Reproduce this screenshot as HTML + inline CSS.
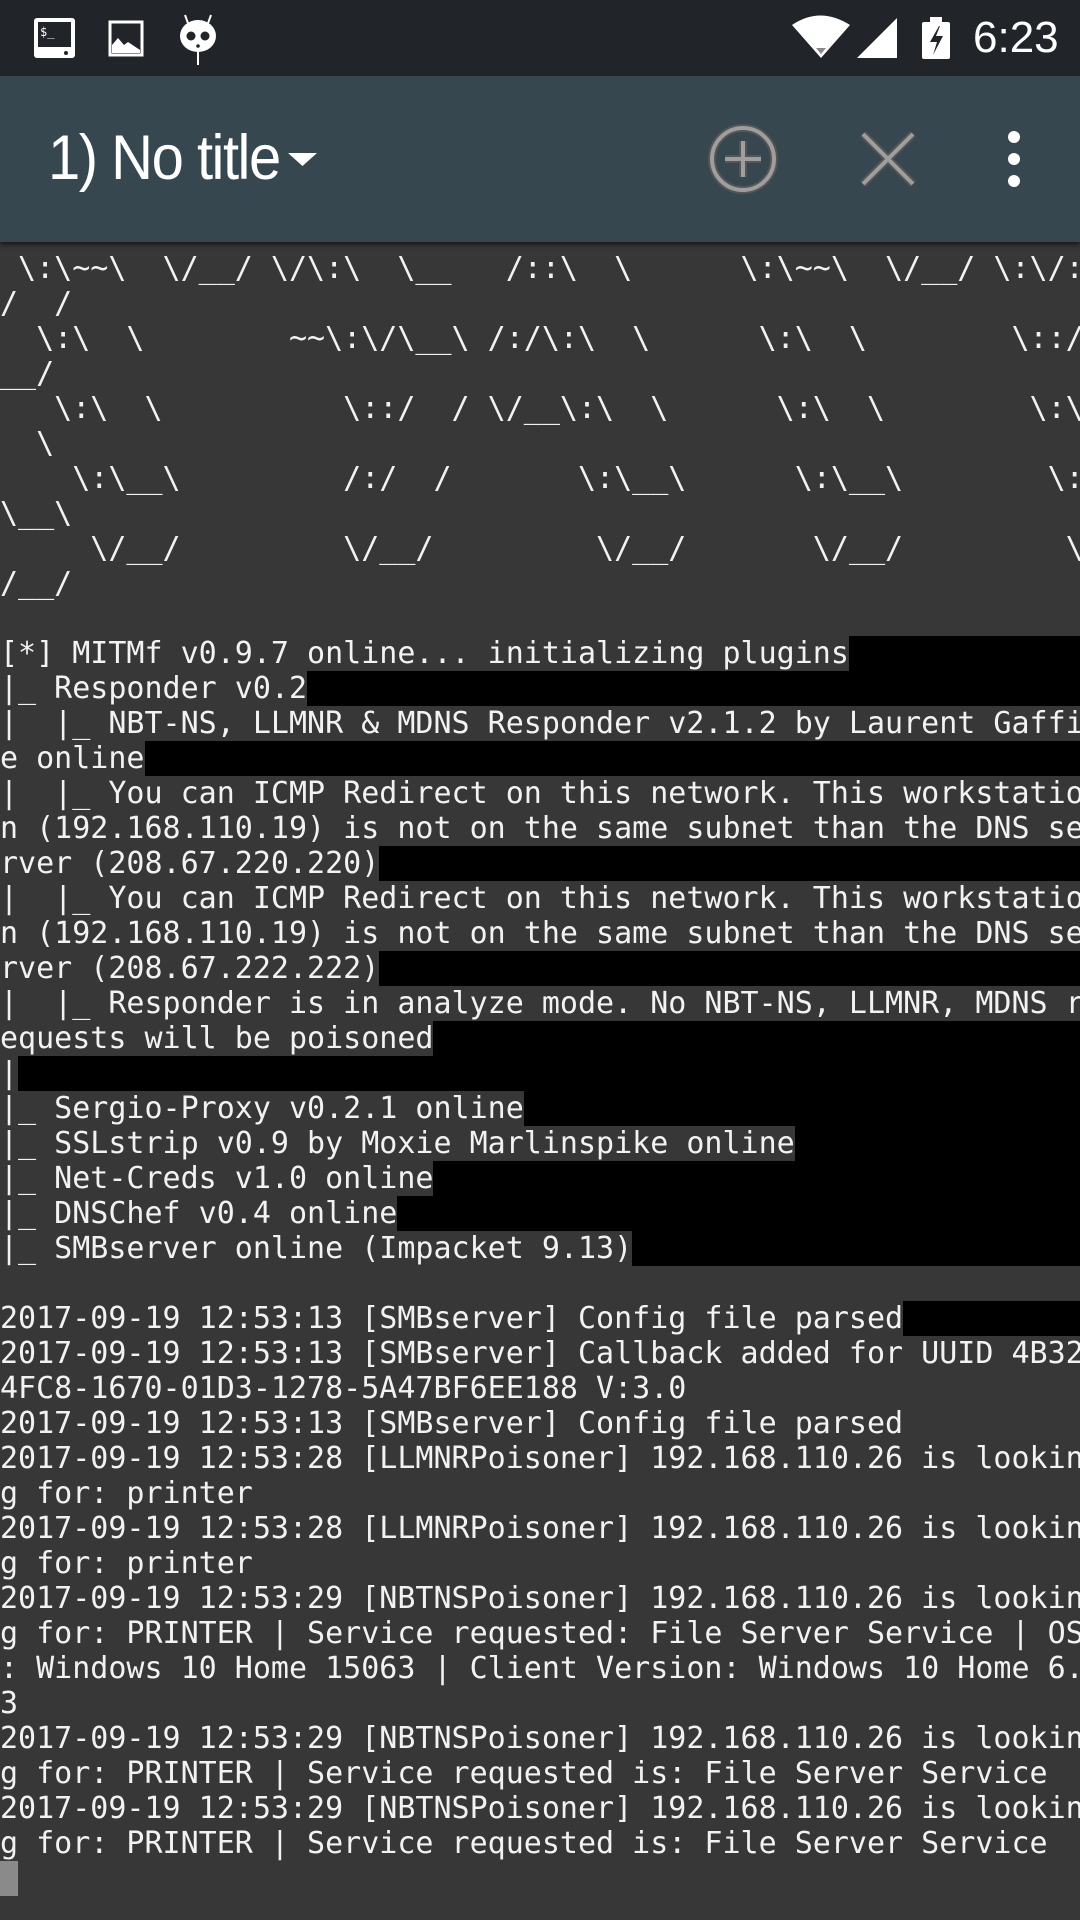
<!DOCTYPE html>
<html><head><meta charset="utf-8"><style>
*{margin:0;padding:0;box-sizing:border-box}
html,body{width:1080px;height:1920px;overflow:hidden;background:#373737}
#sb{position:absolute;left:0;top:0;width:1080px;height:76px;background:#212529}
#tb{position:absolute;left:0;top:76px;width:1080px;height:166px;background:#37474f;box-shadow:0 3px 4px rgba(0,0,0,.5)}
#title{position:absolute;left:48px;top:46px;font:58px "Liberation Sans",sans-serif;color:#fff;letter-spacing:-1.5px;transform:scaleY(1.08);transform-origin:top left}
#term{position:absolute;left:0;top:251px;width:1080px;font:30px/35px "DejaVu Sans Mono",monospace;color:#f2f2f2;white-space:pre}
.r{height:35px;width:1080px;overflow:hidden}
.b{background:#000}
.b span{background:#373737}
#time{position:absolute;left:973px;top:13px;font:44px "Liberation Sans",sans-serif;color:#fff}
</style></head><body>
<div id="sb">
<svg width="1080" height="76" style="position:absolute;left:0;top:0">
<rect x="34" y="18" width="41" height="40" rx="3" fill="#fff"/>
<rect x="38" y="22" width="33" height="25" fill="#212529"/>
<text x="40" y="36" font-size="12" fill="#fff" font-family="DejaVu Sans Mono">$_</text>
<circle cx="66" cy="53" r="2" fill="#212529"/>
<rect x="110" y="22" width="32" height="33" fill="none" stroke="#fff" stroke-width="3"/>
<path d="M112 53 L112 45 L118 38 L124 45 L128 42 L140 50 L140 53 Z" fill="#fff"/>
<path d="M185 15 L189 26 M211 15 L207 26" stroke="#fff" stroke-width="2"/>
<ellipse cx="198" cy="36" rx="18" ry="16" fill="#fff"/>
<circle cx="191" cy="36" r="4.5" fill="#212529"/><circle cx="205" cy="36" r="4.5" fill="#212529"/>
<circle cx="198" cy="46" r="1.8" fill="#212529"/>
<path d="M198 52 L198 65" stroke="#fff" stroke-width="2"/>
<path d="M792 25 Q820 6 850 25 L821 58 Z" fill="#fff"/>
<path d="M816 48 L826 48 L821 54 Z" fill="#888"/>
<path d="M857 58 L897 58 L897 18 Z" fill="#fff"/>
<rect x="922" y="22" width="28" height="37" rx="2" fill="#fff"/><rect x="930" y="17" width="12" height="6" fill="#fff"/>
<path d="M939 26 L930 42 L937 42 L933 55 L943 36 L936 36 L940 26 Z" fill="#212529"/>
</svg>
<div id="time">6:23</div>
</div>
<div id="tb">
<div id="title">1) No title</div>
<svg width="1080" height="166" style="position:absolute;left:0;top:0">
<path d="M288 77 L317 77 L302.5 90 Z" fill="#fff"/>
<circle cx="743" cy="83" r="31" fill="none" stroke="#555" stroke-width="8"/>
<circle cx="743" cy="83" r="31" fill="none" stroke="#9e9e9e" stroke-width="4"/>
<path d="M743 65 V101 M725 83 H761" stroke="#555" stroke-width="8"/>
<path d="M743 65 V101 M725 83 H761" stroke="#9e9e9e" stroke-width="4"/>
<path d="M863 58 L913 108 M913 58 L863 108" stroke="#555" stroke-width="8"/>
<path d="M863 58 L913 108 M913 58 L863 108" stroke="#9e9e9e" stroke-width="4"/>
<circle cx="1014" cy="61" r="6" fill="#fff"/><circle cx="1014" cy="83" r="6" fill="#fff"/><circle cx="1014" cy="105" r="6" fill="#fff"/>
</svg>
</div>
<div id="term"><div class="r"> \:\~~\  \/__/ \/\:\  \__   /::\  \      \:\~~\  \/__/ \:\/:</div><div class="r">/  /</div><div class="r">  \:\  \        ~~\:\/\__\ /:/\:\  \      \:\  \        \::/</div><div class="r">__/</div><div class="r">   \:\  \          \::/  / \/__\:\  \      \:\  \        \:\</div><div class="r">  \</div><div class="r">    \:\__\         /:/  /       \:\__\      \:\__\        \:</div><div class="r">\__\</div><div class="r">     \/__/         \/__/         \/__/       \/__/         \</div><div class="r">/__/</div><div class="r"> </div><div class="r b"><span>[*] MITMf v0.9.7 online... initializing plugins</span></div><div class="r b"><span>|_ Responder v0.2</span></div><div class="r b"><span>|  |_ NBT-NS, LLMNR &amp; MDNS Responder v2.1.2 by Laurent Gaffi</span></div><div class="r b"><span>e online</span></div><div class="r b"><span>|  |_ You can ICMP Redirect on this network. This workstatio</span></div><div class="r b"><span>n (192.168.110.19) is not on the same subnet than the DNS se</span></div><div class="r b"><span>rver (208.67.220.220)</span></div><div class="r b"><span>|  |_ You can ICMP Redirect on this network. This workstatio</span></div><div class="r b"><span>n (192.168.110.19) is not on the same subnet than the DNS se</span></div><div class="r b"><span>rver (208.67.222.222)</span></div><div class="r b"><span>|  |_ Responder is in analyze mode. No NBT-NS, LLMNR, MDNS r</span></div><div class="r b"><span>equests will be poisoned</span></div><div class="r b"><span>|</span></div><div class="r b"><span>|_ Sergio-Proxy v0.2.1 online</span></div><div class="r b"><span>|_ SSLstrip v0.9 by Moxie Marlinspike online</span></div><div class="r b"><span>|_ Net-Creds v1.0 online</span></div><div class="r b"><span>|_ DNSChef v0.4 online</span></div><div class="r b"><span>|_ SMBserver online (Impacket 9.13)</span></div><div class="r"> </div><div class="r b"><span>2017-09-19 12:53:13 [SMBserver] Config file parsed</span></div><div class="r">2017-09-19 12:53:13 [SMBserver] Callback added for UUID 4B32</div><div class="r">4FC8-1670-01D3-1278-5A47BF6EE188 V:3.0</div><div class="r">2017-09-19 12:53:13 [SMBserver] Config file parsed</div><div class="r">2017-09-19 12:53:28 [LLMNRPoisoner] 192.168.110.26 is lookin</div><div class="r">g for: printer</div><div class="r">2017-09-19 12:53:28 [LLMNRPoisoner] 192.168.110.26 is lookin</div><div class="r">g for: printer</div><div class="r">2017-09-19 12:53:29 [NBTNSPoisoner] 192.168.110.26 is lookin</div><div class="r">g for: PRINTER | Service requested: File Server Service | OS</div><div class="r">: Windows 10 Home 15063 | Client Version: Windows 10 Home 6.</div><div class="r">3</div><div class="r">2017-09-19 12:53:29 [NBTNSPoisoner] 192.168.110.26 is lookin</div><div class="r">g for: PRINTER | Service requested is: File Server Service</div><div class="r">2017-09-19 12:53:29 [NBTNSPoisoner] 192.168.110.26 is lookin</div><div class="r">g for: PRINTER | Service requested is: File Server Service</div><div class="r"><div style="width:18px;height:35px;background:#8a8a8a"></div></div></div>
</body></html>
